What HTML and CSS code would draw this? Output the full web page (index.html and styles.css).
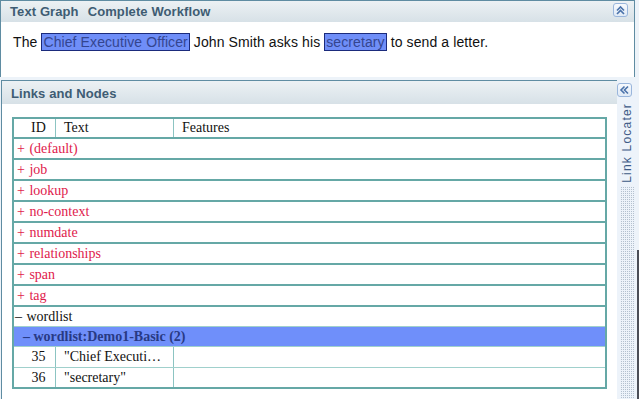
FILE: index.html
```html
<html>
<head>
    <link rel="stylesheet" href="styles.css">
</head>
<body>
    <div class="app">
        <section class="panel graph">
            <header class="panel-head">
                <span class="title">Text Graph</span>
                <span class="title gap">Complete Workflow</span>
                <button class="tool up" title="Collapse">
                    <svg width="13" height="12" viewBox="0 0 13 12">
                        <path d="M3 6.5L6.5 3L10 6.5M3 10L6.5 6.5L10 10" fill="none" stroke="#4a72aa" stroke-width="1.6"/>
                    </svg>
                </button>
            </header>
            <div class="sentence">The <span class="mark">Chief Executive Officer</span> John Smith asks his <span class="mark">secretary</span> to send a letter.</div>
        </section>
        <div class="lower">
            <section class="panel nodes">
                <header class="panel-head tall">
                    <span class="title">Links and Nodes</span>
                </header>
                <div class="nodes-body">
                    <div class="grid">
                        <div class="row head">
                            <div class="c id">ID</div>
                            <div class="c text">Text</div>
                            <div class="c feat">Features</div>
                        </div>
                        <div class="row tree">+ (default)</div>
                        <div class="row tree">+ job</div>
                        <div class="row tree">+ lookup</div>
                        <div class="row tree">+ no-context</div>
                        <div class="row tree">+ numdate</div>
                        <div class="row tree">+ relationships</div>
                        <div class="row tree">+ span</div>
                        <div class="row tree">+ tag</div>
                        <div class="row tree open">&ndash; wordlist</div>
                        <div class="row sub group">&ndash; wordlist:Demo1-Basic (2)</div>
                        <div class="row sub leaf">
                            <div class="c id">35</div>
                            <div class="c text">"Chief Executive Officer"</div>
                            <div class="c feat"></div>
                        </div>
                        <div class="row sub leaf last">
                            <div class="c id">36</div>
                            <div class="c text">"secretary"</div>
                            <div class="c feat"></div>
                        </div>
                    </div>
                </div>
            </section>
            <aside class="locator">
                <button class="tool left" title="Expand">
                    <svg width="13" height="12" viewBox="0 0 13 12">
                        <path d="M6.5 2.5L3 6L6.5 9.5M10 2.5L6.5 6L10 9.5" fill="none" stroke="#4a72aa" stroke-width="1.6"/>
                    </svg>
                </button>
                <div class="locator-label">Link Locater</div>
                <div class="grip"></div>
            </aside>
            <div class="edge"></div>
        </div>
    </div>
</body>
</html>
```

FILE: styles.css
```css
html, body {
    margin: 0px;
    width: 100%;
    height: 100%;
}
body {
    background: #edf3f9;
    font-family: "Liberation Sans", Arial, sans-serif;
    overflow: hidden;
}
.app {
    display: flex;
    flex-direction: column;
    width: 639px;
    height: 399px;
}
.panel {
    display: flex;
    flex-direction: column;
    background: #fff;
    border-top: 1px solid #5f8ca2;
    border-left: 1px solid #5f8ca2;
}
.graph {
    width: 633px;
    height: 76px;
    border-right: 1px solid #5f8ca2;
}
.panel-head {
    display: flex;
    align-items: center;
    height: 21px;
    padding-left: 9px;
    background: linear-gradient(#ecf1f4, #d7e1e7);
}
.panel-head.tall {
    height: 21px;
    padding-top: 2px;
}
.title {
    font-size: 13px;
    font-weight: bold;
    letter-spacing: 0.1px;
    color: #3e5c73;
}
.title.gap {
    margin-left: 9px;
}
.tool {
    display: flex;
    align-items: center;
    justify-content: center;
    width: 15px;
    height: 14px;
    padding: 0;
    border: 1px solid #9ab6dc;
    border-radius: 3px;
    background: linear-gradient(#f6f9fd, #e0eaf6);
    cursor: pointer;
}
.tool.up {
    align-self: flex-start;
    margin: 2px 6px 0 auto;
}
.sentence {
    padding: 11px 0 0 12px;
    font-size: 14px;
    line-height: 18px;
    letter-spacing: 0.1px;
    color: #111;
}
.mark {
    padding: 0 1px;
    border: 1px solid #1b2b7c;
    background: #6f8ef8;
    color: #34458f;
}
.lower {
    flex: 1;
    display: flex;
    margin-top: 3px;
}
.nodes {
    width: 615px;
    margin-left: 1px;
}
.nodes-body {
    flex: 1;
    padding: 13px 0 0 10px;
}
.grid {
    width: 591px;
    border: 2px solid #65a8a6;
    font-family: "Liberation Serif", "Times New Roman", serif;
    font-size: 14px;
}
.row {
    display: flex;
    height: 19px;
    line-height: 19px;
    border-top: 2px solid #65a8a6;
    white-space: nowrap;
}
.row.head {
    height: 18px;
    line-height: 18px;
    border-top: none;
    color: #111;
}
.row.sub {
    border-top: 1px solid #a0d0cc;
}
.tree {
    padding-left: 3px;
    word-spacing: 1px;
    color: #e01a4c;
}
.tree.open {
    padding-left: 1px;
    color: #111;
}
.group {
    padding-left: 9px;
    background: #6f8ffa;
    font-weight: bold;
    color: #283a84;
}
.leaf {
    height: 20px;
    line-height: 20px;
    color: #111;
}
.leaf.last {
    height: 19px;
    line-height: 19px;
}
.c {
    overflow: hidden;
    text-overflow: ellipsis;
}
.c.id {
    width: 33px;
    padding-left: 8px;
    text-align: center;
    border-right: 1px solid #8cc4c2;
}
.c.text {
    width: 101px;
    padding: 0 8px;
    border-right: 1px solid #8cc4c2;
}
.c.feat {
    flex: 1;
    padding-left: 8px;
}
.locator {
    display: flex;
    flex-direction: column;
    align-items: flex-start;
    width: 20px;
    padding-top: 3px;
    background: #edf3fa;
}
.locator-label {
    margin: 6px 0 0 3px;
    writing-mode: vertical-rl;
    transform: rotate(180deg);
    font-size: 12px;
    letter-spacing: 1.2px;
    color: #3d5a86;
}
.grip {
    flex: 1;
    width: 14px;
    margin: 4px 0 0 3px;
    background: conic-gradient(#b4c1cf 25%, transparent 0) 0 0 / 2px 2px;
}
.edge {
    width: 2px;
    margin-top: 170px;
    background: #4b4e57;
}
```
